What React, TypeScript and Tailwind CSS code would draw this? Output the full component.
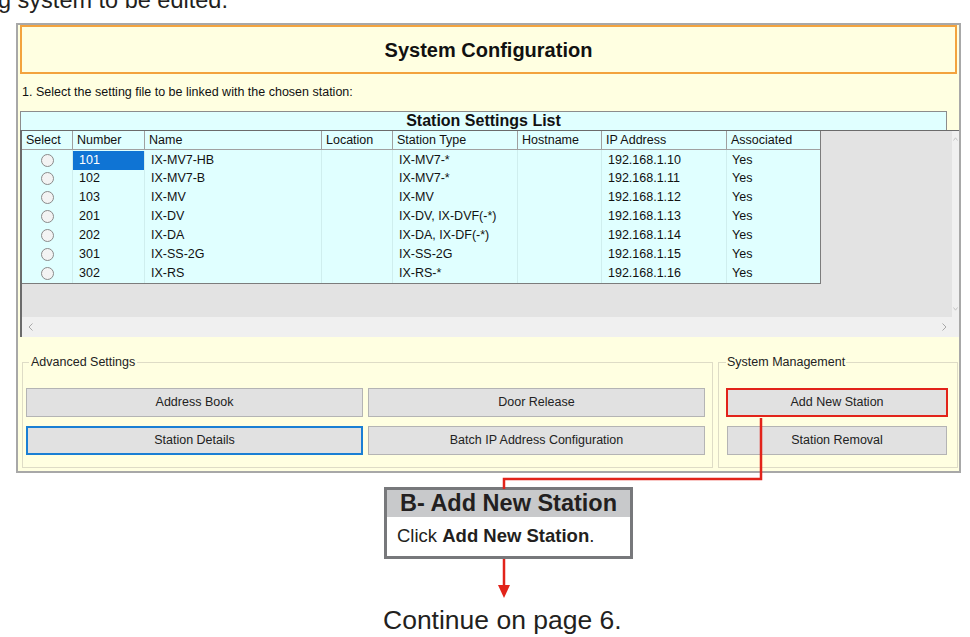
import React from "react";

type Row = {
  number: string;
  name: string;
  location: string;
  type: string;
  hostname: string;
  ip: string;
  associated: string;
};

const rows: Row[] = [
  { number: "101", name: "IX-MV7-HB", location: "", type: "IX-MV7-*", hostname: "", ip: "192.168.1.10", associated: "Yes" },
  { number: "102", name: "IX-MV7-B", location: "", type: "IX-MV7-*", hostname: "", ip: "192.168.1.11", associated: "Yes" },
  { number: "103", name: "IX-MV", location: "", type: "IX-MV", hostname: "", ip: "192.168.1.12", associated: "Yes" },
  { number: "201", name: "IX-DV", location: "", type: "IX-DV, IX-DVF(-*)", hostname: "", ip: "192.168.1.13", associated: "Yes" },
  { number: "202", name: "IX-DA", location: "", type: "IX-DA, IX-DF(-*)", hostname: "", ip: "192.168.1.14", associated: "Yes" },
  { number: "301", name: "IX-SS-2G", location: "", type: "IX-SS-2G", hostname: "", ip: "192.168.1.15", associated: "Yes" },
  { number: "302", name: "IX-RS", location: "", type: "IX-RS-*", hostname: "", ip: "192.168.1.16", associated: "Yes" },
];

const headers = ["Select", "Number", "Name", "Location", "Station Type", "Hostname", "IP Address", "Associated"];

const cols = "grid grid-cols-[51px_72px_177px_71px_125px_84px_125px_93px]";

export default function App() {
  return (
    <div className="relative min-h-screen overflow-hidden bg-white font-['Liberation_Sans',Arial,sans-serif]">
      {/* page text cut at the top */}
      <div className="h-[23px] overflow-hidden">
        <p className="-ml-[2px] -mt-[12px] whitespace-nowrap text-[23.5px] leading-[24px] text-[#231f20]">
          g system to be edited.
        </p>
      </div>

      {/* Window */}
      <div className="ml-[16px] w-[945px] border-2 border-[#a8a8a8] bg-[#ffffe1] text-[#111]">
        <div className="mx-[2px] flex h-[49px] items-center justify-center border-2 border-[#f3a33e]">
          <h1 className="text-[20px] font-bold text-[#111]">System Configuration</h1>
        </div>

        <p className="flex h-[37px] items-center pl-[4px] text-[12.5px]">
          1. Select the setting file to be linked with the chosen station:
        </p>

        <div className="ml-[2px] mr-[12px] flex h-[19px] items-end justify-center border border-b-0 border-[#8c8c8c] bg-[#e0ffff]">
          <span className="text-[16px] font-bold leading-[18px]">Station Settings List</span>
        </div>

        {/* Grid */}
        <div className="ml-[2px] border-l-2 border-t border-[#6b6b6b]">
          <div className="flex h-[186px]">
            <div className="flex-1 bg-[#e3e3e3]">
              <StationTable />
            </div>
            <div className="flex w-[7px] flex-col items-center justify-between bg-[#f0f0f0] py-[6px]">
              <svg width="5" height="4" viewBox="0 0 5 4">
                <path d="M0.5 3.5 L2.5 0.8 L4.5 3.5" fill="none" stroke="#c4c4c4" strokeWidth="1" />
              </svg>
              <svg width="5" height="4" viewBox="0 0 5 4">
                <path d="M0.5 0.5 L2.5 3.2 L4.5 0.5" fill="none" stroke="#c4c4c4" strokeWidth="1" />
              </svg>
            </div>
          </div>
          <div className="flex h-[20px] items-center justify-between bg-[#f0f0f0] pl-[6px] pr-[12px]">
            <Chevron dir="left" />
            <Chevron dir="right" />
          </div>
        </div>

        {/* Settings groups */}
        <div className="flex gap-[5px] pb-[3px] pl-[4px] pt-[17px]">
          <fieldset className="w-[691px] border border-[#dedcc6] pb-[12px] pl-[3px] pt-[18px]">
            <legend className="ml-[3px] px-[2px] text-[12.5px] leading-[16px] text-[#222]">Advanced Settings</legend>
            <div className="grid grid-cols-[337px_337px] gap-x-[5px] gap-y-[9px]">
              <UiButton>Address Book</UiButton>
              <UiButton>Door Release</UiButton>
              <UiButton focused>Station Details</UiButton>
              <UiButton>Batch IP Address Configuration</UiButton>
            </div>
          </fieldset>
          <fieldset className="w-[240px] border border-[#dedcc6] pb-[12px] pl-[7px] pt-[18px]">
            <legend className="px-[1px] text-[12.5px] leading-[16px] text-[#222]">System Management</legend>
            <div className="flex w-[222px] flex-col gap-y-[9px]">
              <UiButton marked>Add New Station</UiButton>
              <div className="px-[1px]">
                <UiButton>Station Removal</UiButton>
              </div>
            </div>
          </fieldset>
        </div>
      </div>

      {/* Callout */}
      <div className="ml-[384px] mt-[14px] w-[249px] border-[3px] border-[#77787b]">
        <div className="flex h-[27px] items-center justify-center bg-[#c8c9cb] text-[23.5px] font-bold leading-none text-[#231f20]">
          B- Add New Station
        </div>
        <div className="flex h-[39px] items-center bg-white pl-[10px] text-[18.5px] leading-none text-[#231f20]">
          Click&nbsp;<b>Add New Station</b>.
        </div>
      </div>
      <svg className="ml-[498px] block" width="12" height="39" viewBox="0 0 12 39">
        <line x1="6" y1="0" x2="6" y2="28" stroke="#e2231a" strokeWidth="2.5" />
        <polygon points="0,26 12,26 6,39" fill="#e2231a" />
      </svg>
      <p className="ml-[383px] mt-[7px] text-[26.5px] leading-[30px] text-[#231f20]">Continue on page 6.</p>

      {/* connector from the button to the callout */}
      <svg className="pointer-events-none absolute left-0 top-0" width="970" height="637">
        <polyline points="761,418 761,479 504,479 504,489" fill="none" stroke="#e2231a" strokeWidth="2.5" />
      </svg>
    </div>
  );
}

function StationTable() {
  return (
    <div className="w-[799px] border-b border-r border-[#7c7c7c] bg-[#e0ffff] text-[12.5px]">
      <div className={`${cols} h-[19px] border-b border-[#a0a0a0]`}>
        {headers.map((h) => (
          <div key={h} className="flex items-center border-r border-[#a0a0a0] pl-[4px] last:border-r-0">
            {h}
          </div>
        ))}
      </div>
      {rows.map((r, i) => (
        <div key={r.number} className={`${cols} h-[19px]`}>
          <div className="flex items-center justify-center border-r border-[#cfeeee]">
            <span className="h-[13px] w-[13px] rounded-full border border-[#8a8a8a] bg-[#f3f3f3]" />
          </div>
          <div
            className={`flex items-center border-r border-[#cfeeee] pl-[6px] ${
              i === 0 ? "my-[1px] bg-[#0f74d4] text-white" : ""
            }`}
          >
            {r.number}
          </div>
          <Cell>{r.name}</Cell>
          <Cell>{r.location}</Cell>
          <Cell>{r.type}</Cell>
          <Cell>{r.hostname}</Cell>
          <Cell>{r.ip}</Cell>
          <div className="flex items-center pl-[5px]">{r.associated}</div>
        </div>
      ))}
    </div>
  );
}

function Cell({ children }: { children: React.ReactNode }) {
  return <div className="flex items-center whitespace-nowrap border-r border-[#cfeeee] pl-[6px]">{children}</div>;
}

function UiButton({
  children,
  focused,
  marked,
}: {
  children: React.ReactNode;
  focused?: boolean;
  marked?: boolean;
}) {
  return (
    <button
      className={`flex h-[29px] w-full items-center justify-center bg-[#e1e1e1] text-[12.5px] text-[#222] ${
        focused
          ? "border-2 border-[#1a7fd4]"
          : marked
            ? "border-2 border-[#e2231a]"
            : "border border-[#b4b4b4]"
      }`}
    >
      {children}
    </button>
  );
}

function Chevron({ dir }: { dir: "left" | "right" }) {
  return (
    <svg width="5" height="8" viewBox="0 0 5 8">
      <path
        d={dir === "left" ? "M4.5 0.5 L1 4 L4.5 7.5" : "M0.5 0.5 L4 4 L0.5 7.5"}
        fill="none"
        stroke="#a8a8a8"
        strokeWidth="1"
      />
    </svg>
  );
}
